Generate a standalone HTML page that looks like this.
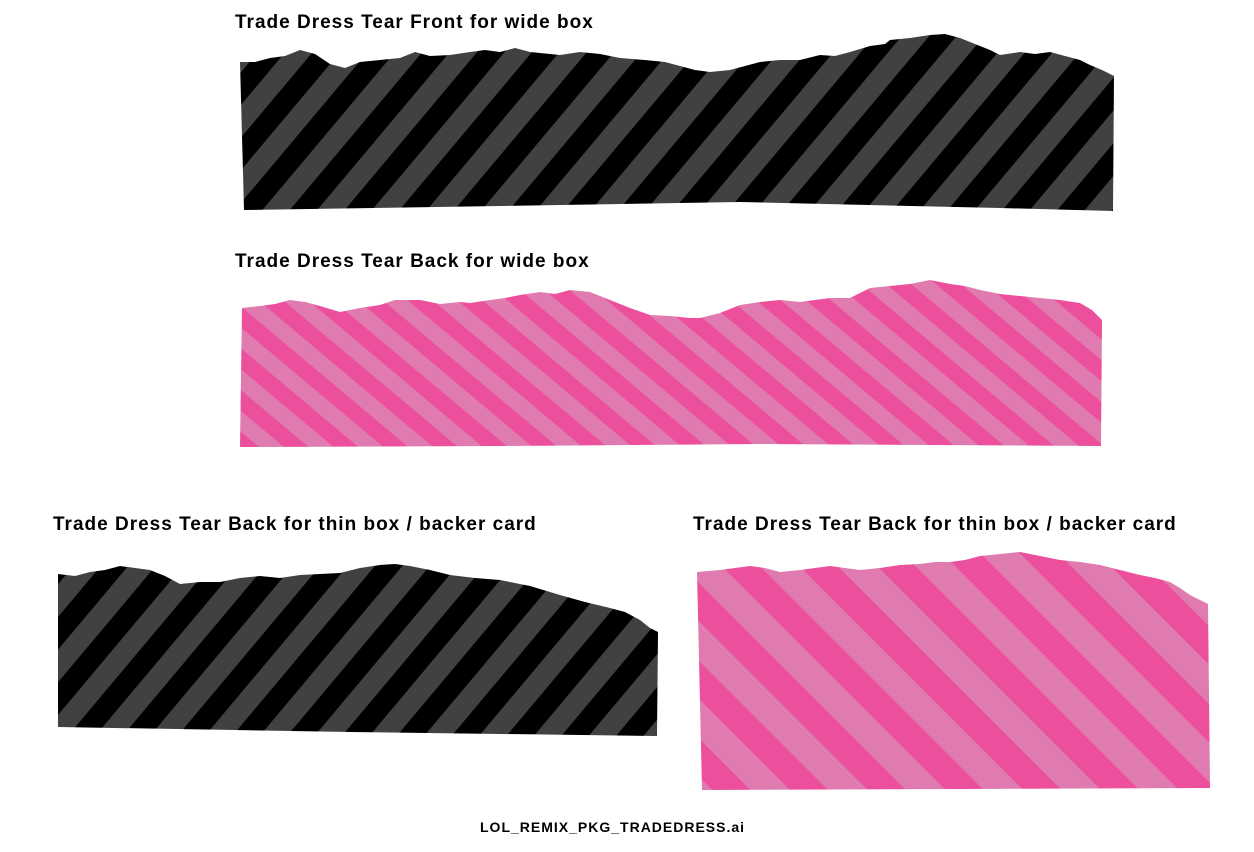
<!DOCTYPE html>
<html><head><meta charset="utf-8"><style>
html,body{margin:0;padding:0;background:#fff;width:1254px;height:852px;overflow:hidden}
svg{display:block}
text{font-family:"Liberation Sans",sans-serif;font-weight:bold;fill:#000;letter-spacing:1px}
</style></head><body>
<svg width="1254" height="852" viewBox="0 0 1254 852">
<defs>
<pattern id="blk" width="42" height="42" patternUnits="userSpaceOnUse" patternTransform="rotate(40)">
<rect width="42" height="42" fill="#000"/><rect width="21" height="42" fill="#414141"/></pattern>
<pattern id="pk1" width="32" height="32" patternUnits="userSpaceOnUse" patternTransform="rotate(-50)">
<rect width="32" height="32" fill="#e07bb0"/><rect width="16" height="32" fill="#ec4f9c"/></pattern>
<pattern id="pk2" width="55" height="55" patternUnits="userSpaceOnUse" patternTransform="rotate(-45)">
<rect width="55" height="55" fill="#e07bb0"/><rect width="27" height="55" fill="#ec4f9c"/></pattern>
</defs>
<text x="235" y="28" font-size="19">Trade Dress Tear Front for wide box</text>
<polygon fill="url(#blk)" points="240,62 255,62 270,58 285,56 300,50 315,54 330,64 345,68 360,62 380,60 400,58 415,52 430,56 450,55 470,52 485,50 500,52 515,48 530,52 560,55 580,52 600,54 620,58 645,60 665,62 680,66 695,70 710,72 730,70 745,66 760,62 780,60 800,60 820,55 835,56 850,52 870,46 885,44 890,40 910,38 930,35 945,34 960,38 975,44 990,50 1000,55 1020,52 1035,54 1050,52 1065,56 1080,60 1090,65 1102,70 1114,76 1113,211 1000,208 740,202 500,206 244,210"/>
<text x="235" y="267" font-size="19">Trade Dress Tear Back for wide box</text>
<polygon fill="url(#pk1)" points="242,308 260,306 275,304 290,300 305,302 320,306 340,312 360,308 380,305 395,300 420,300 440,304 460,302 470,303 490,300 505,298 520,295 540,292 555,294 570,290 590,292 610,300 630,308 650,315 670,316 690,318 700,318 720,313 740,305 760,302 780,300 800,302 830,298 850,298 870,288 890,286 910,284 930,280 950,284 965,286 980,290 1000,294 1020,296 1040,298 1060,300 1080,303 1092,310 1102,320 1101,446 760,444 500,446 240,447"/>
<text x="53" y="530" font-size="19">Trade Dress Tear Back for thin box / backer card</text>
<polygon fill="url(#blk)" points="58,574 75,576 90,572 105,570 120,566 135,568 150,570 165,576 180,584 200,582 220,582 240,578 260,576 280,578 300,575 320,574 340,573 360,568 380,565 395,564 410,566 430,570 450,575 475,578 500,580 530,586 560,595 585,602 610,608 625,612 640,620 650,628 658,632 657,736 350,732 58,727"/>
<text x="693" y="530" font-size="19">Trade Dress Tear Back for thin box / backer card</text>
<polygon fill="url(#pk2)" points="697,572 720,570 735,568 750,566 765,568 780,572 800,570 815,568 830,566 845,568 860,570 880,568 900,565 920,564 935,562 950,562 965,560 980,556 1000,554 1020,552 1040,556 1060,560 1080,562 1100,565 1120,570 1140,575 1155,578 1170,582 1180,588 1190,595 1200,600 1208,604 1210,788 960,789 702,790"/>
<text x="480" y="832" font-size="14">LOL_REMIX_PKG_TRADEDRESS.ai</text>
</svg>
</body></html>
